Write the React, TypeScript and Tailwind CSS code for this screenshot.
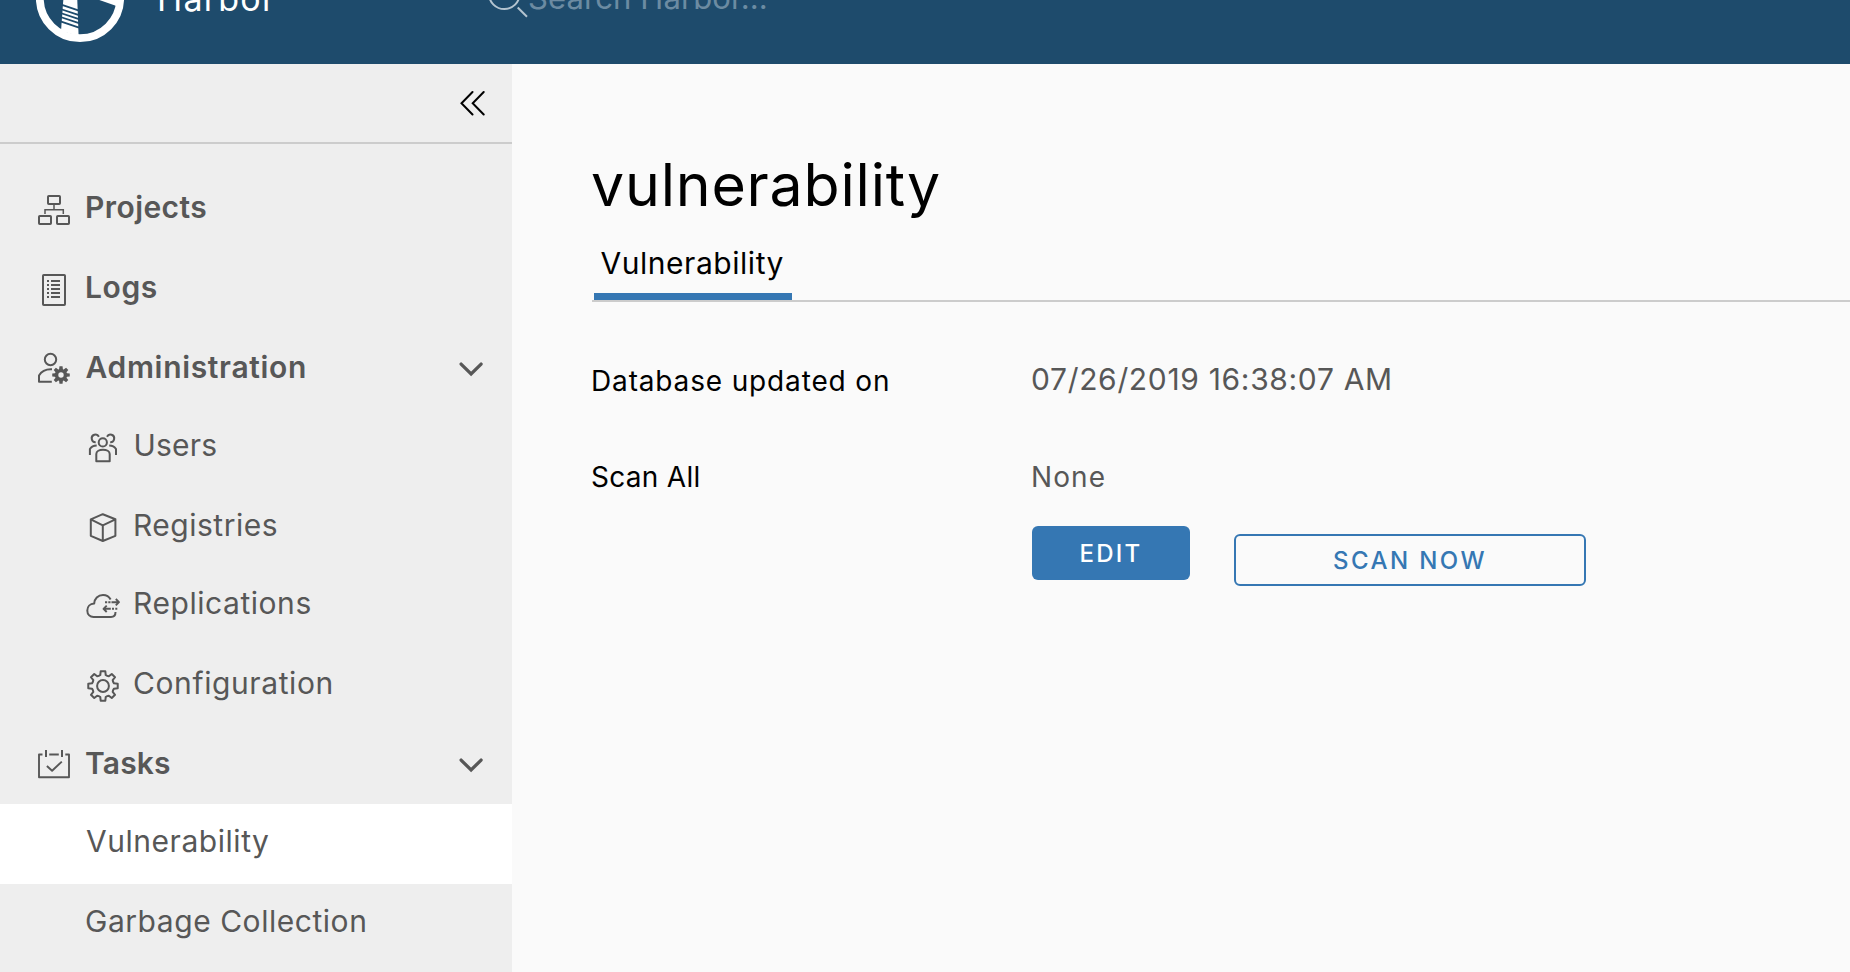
import type { ReactNode } from "react";

function Icon({ children, className = "" }: { children: ReactNode; className?: string }) {
  return (
    <svg
      viewBox="0 0 36 36"
      className={`size-9 shrink-0 ${className}`}
      fill="none"
      stroke="currentColor"
      strokeWidth="2"
      strokeLinejoin="round"
    >
      {children}
    </svg>
  );
}

const polar = (cx: number, cy: number, r: number, deg: number) => {
  const a = (deg * Math.PI) / 180;
  return `${(cx + r * Math.sin(a)).toFixed(2)} ${(cy - r * Math.cos(a)).toFixed(2)}`;
};

/** Outline of an eight-toothed gear. */
function gearPath(cx: number, cy: number, outer: number, inner: number, top: number, base: number) {
  let d = "";
  for (let i = 0; i < 8; i++) {
    const a = i * 45;
    d += `${i ? "L" : "M"}${polar(cx, cy, inner, a - base)}L${polar(cx, cy, outer, a - top)}`;
    d += `L${polar(cx, cy, outer, a + top)}L${polar(cx, cy, inner, a + base)}`;
    d += `Q${polar(cx, cy, inner - 0.6, a + 22.5)} ${polar(cx, cy, inner, a + 45 - base)}`;
  }
  return d + "Z";
}

const ProjectsIcon = (
  <Icon>
    <rect x="12" y="4" width="12" height="8" rx="0.8" />
    <path d="M18 13v4.7M9 22v-4.3h18.3V22" strokeWidth="1.5" strokeLinejoin="miter" />
    <rect x="3" y="24" width="12" height="8" rx="0.8" />
    <rect x="21" y="24" width="12" height="8" rx="0.8" />
  </Icon>
);

const LogsIcon = (
  <Icon>
    <rect x="7" y="3" width="22" height="30" rx="0.8" />
    <path d="M11 9h2M11 13h2M11 17h2M11 21h2M11 25h2M15 9h9M15 13h9M15 17h9M15 21h9M15 25h9" />
  </Icon>
);

const AdminIcon = (
  <Icon>
    <circle cx="14.5" cy="7.5" r="5.7" />
    <path d="M16 17.3C10.5 17 5.5 19.2 3 23.4V29.7H15.8" />
    <path
      d={`${gearPath(25, 23, 8.9, 6.4, 10, 17)}M25 20.3a2.7 2.7 0 1 0 0 5.4a2.7 2.7 0 1 0 0-5.4Z`}
      fill="currentColor"
      fillRule="evenodd"
      stroke="none"
    />
  </Icon>
);

const UsersIcon = (
  <Icon>
    <circle cx="17.8" cy="12.4" r="4.1" />
    <path d="M11.3 31.2V24C11.3 21.5 14.4 19.8 18 19.8s6.7 1.7 6.7 4.2V31.2Z" />
    <path d="M13.9 6.7A3.8 3.8 0 1 0 10.7 12.2M22 6.7A3.8 3.8 0 1 1 25.2 12.2" />
    <path d="M4.9 25v-6C6.5 16.5 9 15.6 11.7 15.5M31 25v-6C29.4 16.5 26.9 15.6 24.2 15.5" />
  </Icon>
);

const RegistriesIcon = (
  <Icon>
    <path d="M17.8 4.2L30.4 9.3V25.8L17.8 31L5.8 25.8V9.3ZM5.8 9.3L17.8 15.3L30.4 9.3M17.8 15.3V31" />
  </Icon>
);

const ReplicationsIcon = (
  <Icon>
    <path d="M25.6 11.5C24.2 8.6 21.3 6.9 18 6.9C13 6.9 9.3 10.8 9.2 15.6C5 15.8 2.3 18.8 2.3 22.5C2.3 26.5 5.2 28.9 8.5 28.9H26C28.8 28.9 30.5 26.8 30.5 24" />
    <path d="M20 14.2h2.2M23.3 14.2h2.2M26.5 14.2H34M30.8 11l3.2 3.2l-3.2 3.2" strokeWidth="1.9" />
    <path d="M25.8 20.8H18.5M21.7 17.6l-3.2 3.2l3.2 3.2M27 20.8h2M30.3 20.8h2" strokeWidth="1.9" />
  </Icon>
);

const ConfigurationIcon = (
  <Icon>
    <path d={gearPath(18, 18, 14.9, 11.3, 9, 14)} />
    <circle cx="18" cy="18" r="5.9" />
  </Icon>
);

const TasksIcon = (
  <Icon>
    <path d="M6.5 6.5H3V29.2H33V6.5H29.3M13.2 6.5h9.6" strokeWidth="1.9" />
    <path d="M10 2v7M26 2v7" />
    <path d="M10.9 18l5.2 4.8l9.7-9.2" strokeWidth="1.9" />
  </Icon>
);

function Chevron() {
  return (
    <svg
      viewBox="0 0 24 16"
      className="mt-[32px] ml-auto h-4 w-6 shrink-0"
      fill="none"
      stroke="currentColor"
      strokeWidth="3.3"
      strokeLinecap="round"
    >
      <path d="M2.1 2.1L12.1 12L22.1 2.1" />
    </svg>
  );
}

type Item = {
  label: string;
  icon?: ReactNode;
  row: string;
  text: string;
  expandable?: boolean;
};

const items: Item[] = [
  { label: "Projects", icon: ProjectsIcon, row: "h-[80px] pl-9", text: "ml-[13px] font-semibold tracking-[0.43px]" },
  { label: "Logs", icon: LogsIcon, row: "h-[80px] pl-9", text: "ml-[13px] font-semibold tracking-[0.6px]" },
  { label: "Administration", icon: AdminIcon, row: "h-[78px] pl-9", text: "ml-[13.5px] font-semibold tracking-[0.67px]", expandable: true },
  { label: "Users", icon: UsersIcon, row: "h-[80px] pl-[85px]", text: "ml-[12.5px] tracking-[0.2px]" },
  { label: "Registries", icon: RegistriesIcon, row: "h-[78px] pl-[85px]", text: "ml-3 tracking-[0.5px]" },
  { label: "Replications", icon: ReplicationsIcon, row: "h-[80px] pl-[85px]", text: "ml-3 tracking-[0.55px]" },
  { label: "Configuration", icon: ConfigurationIcon, row: "h-[80px] pl-[85px]", text: "ml-3 tracking-[0.6px]" },
  { label: "Tasks", icon: TasksIcon, row: "h-[78px] pl-9", text: "ml-[13px] font-semibold tracking-[0.15px]", expandable: true },
  { label: "Vulnerability", row: "h-[80px] bg-white pl-[86px]", text: "tracking-[0.54px]" },
  { label: "Garbage Collection", row: "h-[80px] pl-[85px]", text: "tracking-[0.54px]" },
];

function Header() {
  return (
    <header className="flex h-16 shrink-0 items-start overflow-hidden bg-[#1e4b6c]">
      <svg viewBox="0 0 92 64" className="ml-9 h-16 w-[92px] shrink-0">
        <circle cx="44" cy="-2" r="40.2" fill="none" stroke="#fff" strokeWidth="7.8" />
        <path d="M27.3 0H41.3L42.6 36L25 31Z" fill="#fff" />
        <path d="M63.3 0L79.8 5.8L86 8V0Z" fill="#fff" />
        <path
          d="M24.5 4.4L43 10.6M24.5 9L43 15.2M24.5 13L43 19.2M24.5 17L43 23.2M24.5 21.3L43 27.7"
          stroke="#1e4b6c"
          strokeWidth="1.8"
        />
      </svg>
      <div className="-mt-[21px] ml-[29px] w-[329px] text-[34px] leading-[40px] tracking-[1.2px] text-white">Harbor</div>
      <svg viewBox="0 0 44 24" className="h-6 w-11 shrink-0" fill="none" stroke="#b4c4d0" strokeWidth="2">
        <circle cx="18.3" cy="-6.2" r="15.3" />
        <path d="M31.7 7.5L41 16.7" />
      </svg>
      <div className="-mt-5 -ml-0.5 text-[31px] leading-9 tracking-[0.1px] text-[#6c8ba2]">Search Harbor...</div>
    </header>
  );
}

function Sidebar() {
  return (
    <aside className="flex w-[512px] shrink-0 flex-col overflow-hidden bg-[#eeeeee] text-[#575757]">
      <div className="flex h-20 shrink-0 justify-end border-b-2 border-[#cccccc] pt-[26px] pr-[27px]">
        <svg viewBox="0 0 25 26" className="h-[26px] w-[25px]" fill="none" stroke="#000" strokeWidth="2" strokeLinecap="round">
          <path d="M12.5 2L1.5 13.3L12.5 24.5M23.7 2L12.7 13.3L23.7 24.5" />
        </svg>
      </div>
      <nav className="flex flex-col pt-[26px]">
        {items.map((item) => (
          <a key={item.label} className={`flex shrink-0 items-start pr-[29px] ${item.row}`}>
            {item.icon && <span className="mt-[22px]">{item.icon}</span>}
            <span className={`mt-[19px] text-[30px] leading-9 ${item.text}`}>{item.label}</span>
            {item.expandable && <Chevron />}
          </a>
        ))}
      </nav>
    </aside>
  );
}

function Main() {
  return (
    <main className="min-w-0 flex-1 pt-[86px] pl-20">
      <h1 className="-ml-px text-[59px] leading-[70px] font-normal tracking-[0.8px] text-black">vulnerability</h1>
      <div className="flex h-[82px] border-b-2 border-[#cccccc] pl-0.5">
        <button className="flex w-[198px] items-start border-b-[7px] border-[#3577b3] pt-[25px] pl-[6.5px] text-[30px] leading-9 tracking-[0.54px] text-black">
          Vulnerability
        </button>
      </div>
      <section className="-ml-px pt-[59px]">
        <div className="flex h-[97px]">
          <div className="w-[440px] pt-0.5 text-[28px] leading-9 tracking-[0.85px] text-black">Database updated on</div>
          <div className="text-[30px] leading-9 tracking-[0.67px] text-[#575757]">07/26/2019 16:38:07 AM</div>
        </div>
        <div className="flex pt-px">
          <div className="w-[440px] text-[28px] leading-9 tracking-[0.3px] text-black">Scan All</div>
          <div>
            <div className="text-[28px] leading-9 tracking-[1.1px] text-[#575757]">None</div>
            <div className="mt-[31px] ml-px flex items-start text-[24px] leading-9 font-medium">
              <button className="h-[54px] w-[158px] rounded-md bg-[#3577b3] pt-0.5 tracking-[2.3px] text-white">EDIT</button>
              <button className="mt-2 ml-11 h-[52px] w-[352px] rounded-md border-2 border-[#3577b3] pt-px tracking-[2.4px] text-[#3577b3]">
                SCAN NOW
              </button>
            </div>
          </div>
        </div>
      </section>
    </main>
  );
}

export default function App() {
  return (
    <div className="flex h-[972px] w-[1850px] flex-col overflow-hidden bg-[#fafafa] font-['Inter',sans-serif]">
      <Header />
      <div className="flex min-h-0 flex-1">
        <Sidebar />
        <Main />
      </div>
    </div>
  );
}
